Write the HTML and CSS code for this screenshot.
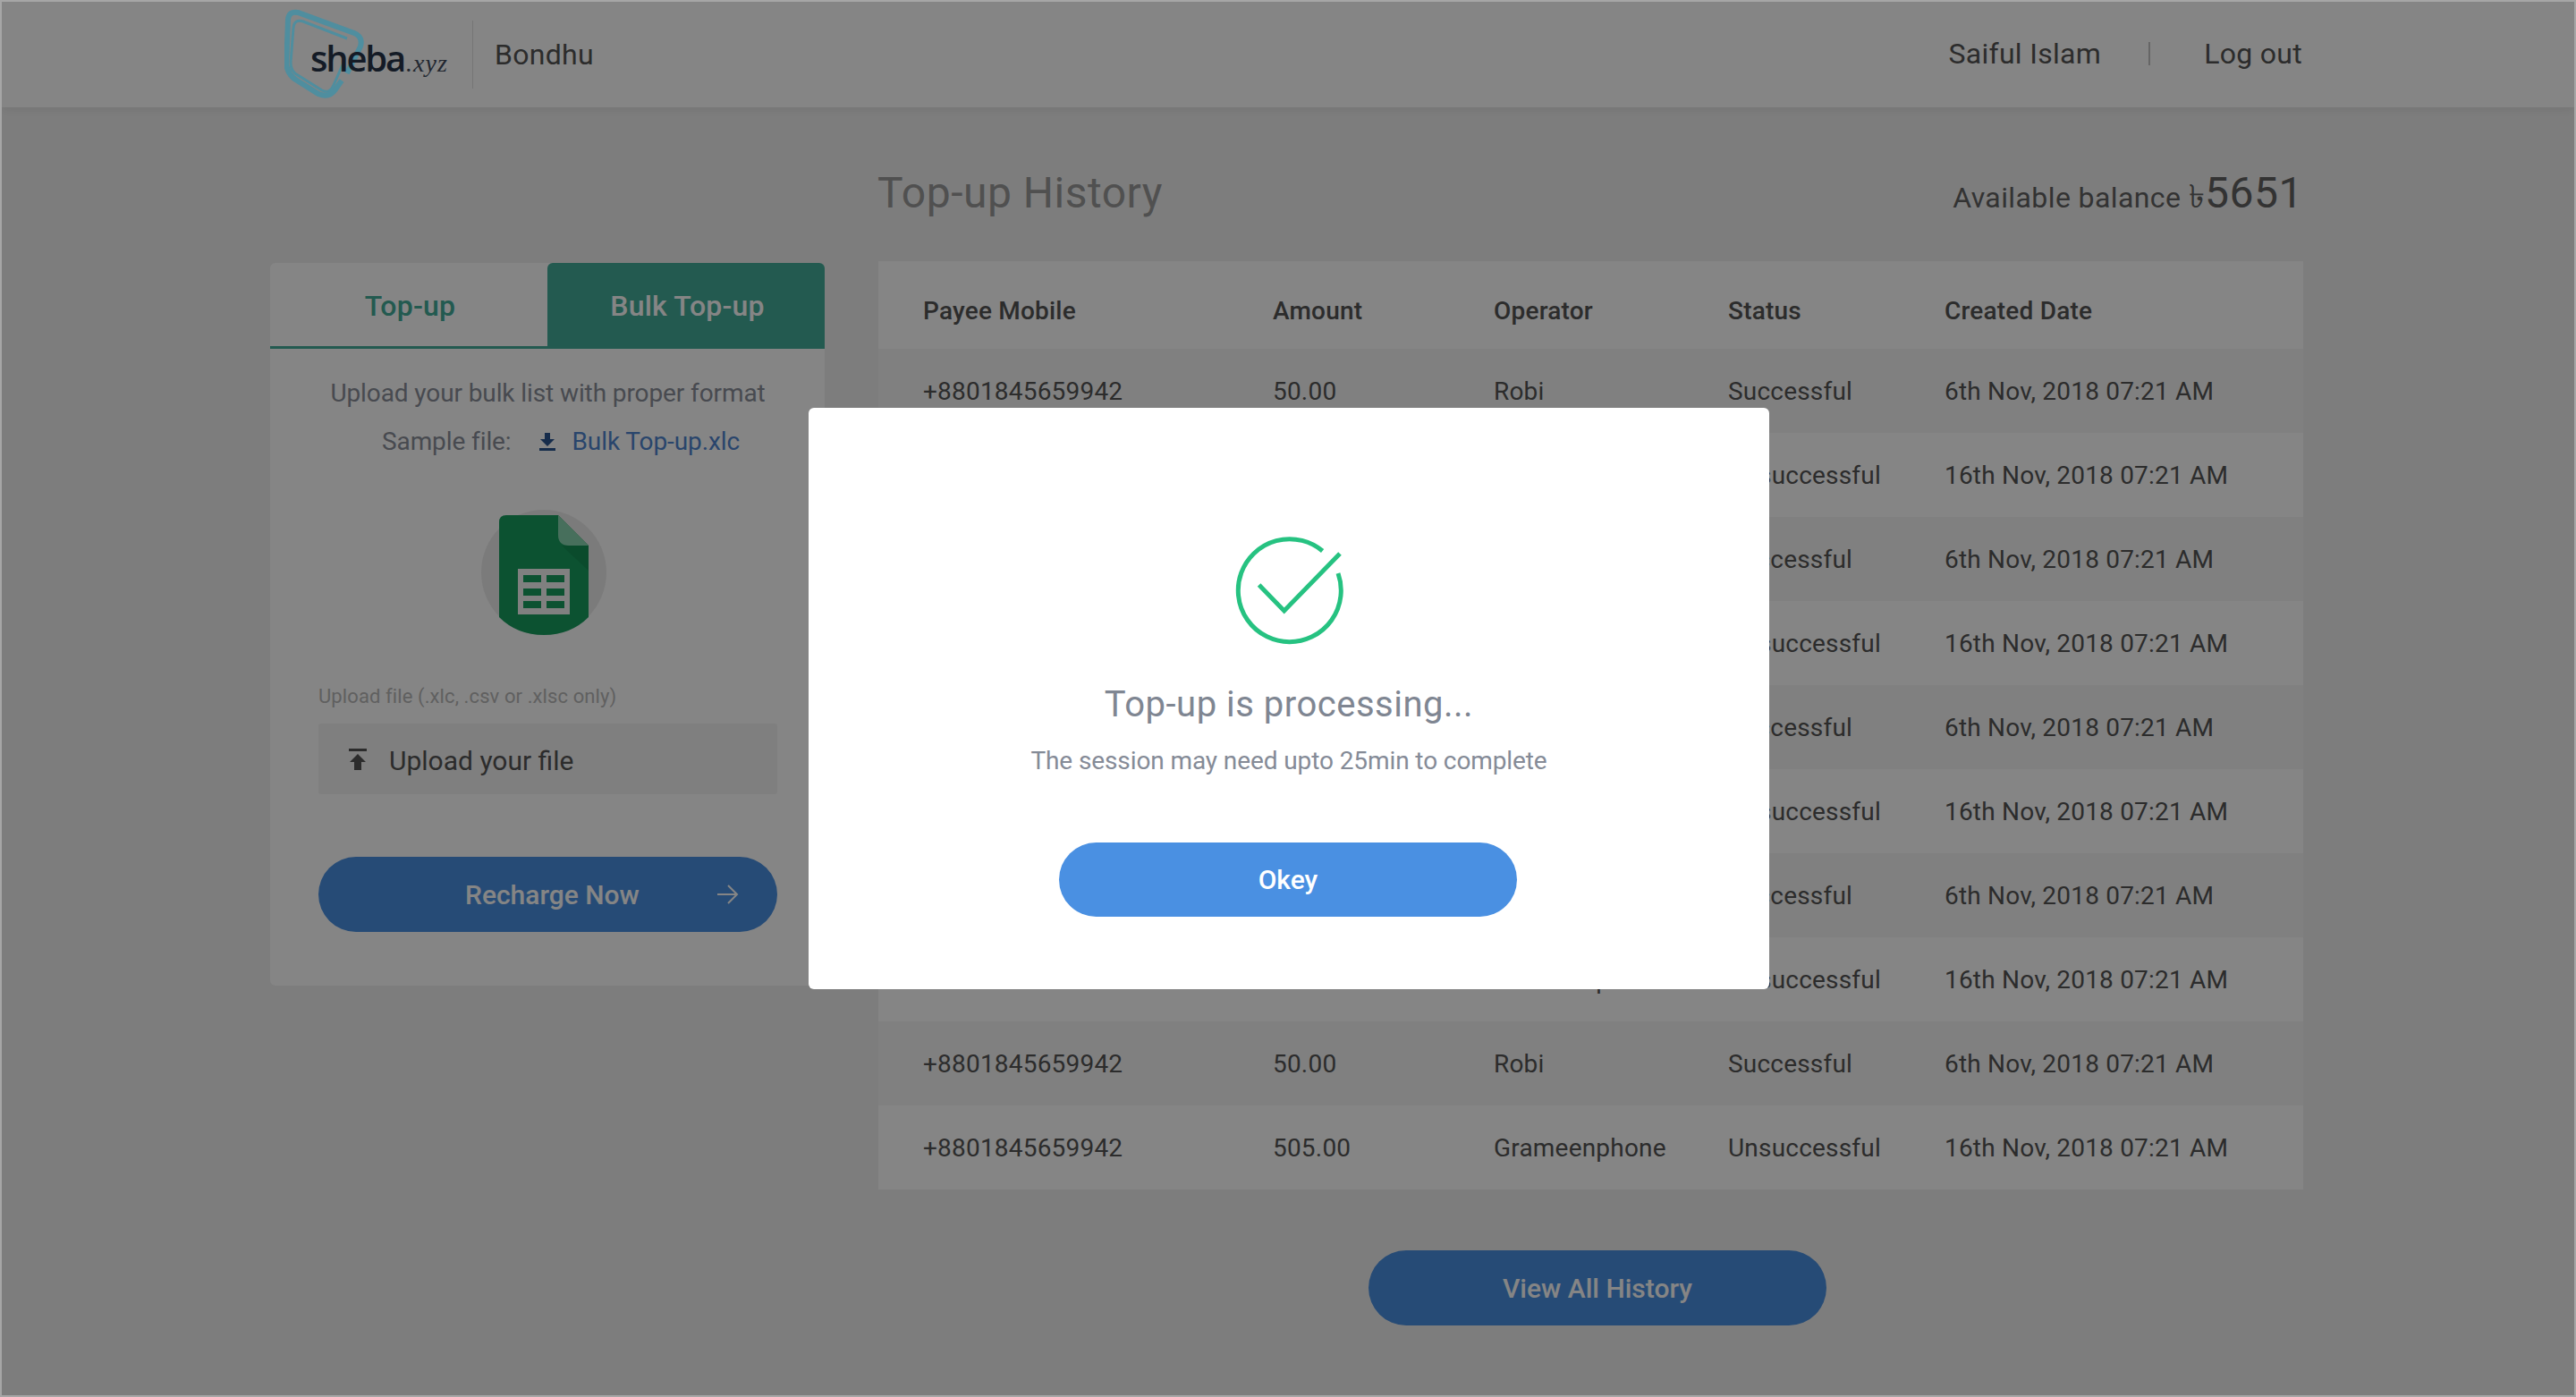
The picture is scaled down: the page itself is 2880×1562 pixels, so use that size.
FILE: index.html
```html
<!DOCTYPE html>
<html>
<head>
<meta name="viewport" content="width=device-width, initial-scale=1.0"/>
<title>Top-up History</title>
<link rel="stylesheet" href="styles.css">
</head>
<body>
<div class="page">

    <header class="topbar">
        <div class="wrap topbarInner">
            <div class="logo">
                <svg class="logoRing" width="92" height="100" viewBox="0 0 92 100" fill="none" stroke="#4f8e9f">
                    <path stroke-width="6" d="M3 40 L4 12 Q5 2 15 4 L78 27 Q88 31 85 42 L70 72"/>
                    <path stroke-width="3" d="M70 33 L21 14 Q11 11 10 21 L7 60 Q7 70 15 74 L42 91 Q51 95 55 85 L67 58"/>
                    <path stroke-width="6" d="M3 40 L2 62 Q4 74 14 80 L38 95 Q50 100 57 90 L64 80"/>
                </svg>
                <span class="logoName">sheba</span><span class="logoDomain">.xyz</span>
            </div>
            <div class="brandDivider"></div>
            <span class="brandName">Bondhu</span>
            <nav class="userNav">
                <span>Saiful Islam</span>
                <span class="navDivider"></span>
                <a href="#">Log out</a>
            </nav>
        </div>
    </header>

    <main class="wrap mainGrid">

        <section class="rechargeCard">
            <div class="tabs">
                <div class="tab">Top-up</div>
                <div class="tab tabActive">Bulk Top-up</div>
            </div>
            <div class="cardBody">
                <p class="hint">Upload your bulk list with proper format</p>
                <p class="sampleRow">
                    <span>Sample file:</span>
                    <svg class="sampleIcon" width="18" height="20" viewBox="0 0 18 20" fill="#2b5590">
                        <path d="M6 0 H12 V7 H17 L9 15 L1 7 H6 Z"/>
                        <rect x="0" y="17" width="18" height="3"/>
                    </svg>
                    <a class="sampleLink" href="#">Bulk Top-up.xlc</a>
                </p>
                <svg class="sheetIcon" width="140" height="140" viewBox="0 0 140 140">
                    <circle cx="70" cy="70" r="70" fill="#ececec"/>
                    <path fill="#189d5f" d="M20 14 Q20 6 28 6 H86 L120 40 V120 Q100 140 70 140 Q40 140 20 120 Z"/>
                    <path fill="#159055" d="M90 40 H120 V68 Z"/>
                    <path fill="#89d5b0" d="M86 6 L120 40 H98 Q86 40 86 28 Z"/>
                    <rect x="41" y="66" width="58" height="51" fill="#f6f6f6"/>
                    <g fill="#189d5f">
                        <rect x="47" y="73" width="20" height="8"/>
                        <rect x="73" y="73" width="20" height="8"/>
                        <rect x="47" y="88" width="20" height="8"/>
                        <rect x="73" y="88" width="20" height="8"/>
                        <rect x="47" y="102" width="20" height="8"/>
                        <rect x="73" y="102" width="20" height="8"/>
                    </g>
                </svg>
                <label class="uploadLabel">Upload file (.xlc, .csv or .xlsc only)</label>
                <div class="uploadBox">
                    <svg width="20" height="24" viewBox="0 0 20 24" fill="#555">
                        <rect x="0" y="0" width="20" height="3"/>
                        <path d="M10 6 L19 15 H14 V24 H6 V15 H1 Z"/>
                    </svg>
                    <span>Upload your file</span>
                </div>
                <a class="pillBtn rechargeBtn" href="#">
                    <span>Recharge Now</span>
                    <svg class="rechargeArrow" width="24" height="24" viewBox="0 0 24 24" fill="none" stroke="#fff" stroke-width="2">
                        <path d="M0 12 H22 M12 2 L22 12 L12 22"/>
                    </svg>
                </a>
            </div>
        </section>

        <section class="history">
            <div class="historyHead">
                <h1>Top-up History</h1>
                <div class="balance">Available balance <span class="taka">৳</span><span class="balanceValue">5651</span></div>
            </div>
            <table class="historyTable">
                <colgroup>
                    <col class="colMobile"><col class="colAmount"><col class="colOperator"><col class="colStatus"><col class="colDate">
                </colgroup>
                <thead>
                    <tr>
                        <th>Payee Mobile</th>
                        <th>Amount</th>
                        <th>Operator</th>
                        <th>Status</th>
                        <th>Created Date</th>
                    </tr>
                </thead>
                <tbody>
                    <tr><td>+8801845659942</td><td>50.00</td><td>Robi</td><td>Successful</td><td>6th Nov, 2018 07:21 AM</td></tr>
                    <tr><td>+8801845659942</td><td>505.00</td><td>Grameenphone</td><td>Unsuccessful</td><td>16th Nov, 2018 07:21 AM</td></tr>
                    <tr><td>+8801845659942</td><td>50.00</td><td>Robi</td><td>Successful</td><td>6th Nov, 2018 07:21 AM</td></tr>
                    <tr><td>+8801845659942</td><td>505.00</td><td>Grameenphone</td><td>Unsuccessful</td><td>16th Nov, 2018 07:21 AM</td></tr>
                    <tr><td>+8801845659942</td><td>50.00</td><td>Robi</td><td>Successful</td><td>6th Nov, 2018 07:21 AM</td></tr>
                    <tr><td>+8801845659942</td><td>505.00</td><td>Grameenphone</td><td>Unsuccessful</td><td>16th Nov, 2018 07:21 AM</td></tr>
                    <tr><td>+8801845659942</td><td>50.00</td><td>Robi</td><td>Successful</td><td>6th Nov, 2018 07:21 AM</td></tr>
                    <tr><td>+8801845659942</td><td>505.00</td><td>Grameenphone</td><td>Unsuccessful</td><td>16th Nov, 2018 07:21 AM</td></tr>
                    <tr><td>+8801845659942</td><td>50.00</td><td>Robi</td><td>Successful</td><td>6th Nov, 2018 07:21 AM</td></tr>
                    <tr><td>+8801845659942</td><td>505.00</td><td>Grameenphone</td><td>Unsuccessful</td><td>16th Nov, 2018 07:21 AM</td></tr>
                </tbody>
            </table>
            <a class="pillBtn viewAllBtn" href="#">View All History</a>
        </section>

    </main>

    <div class="overlay">
        <div class="modal">
            <svg class="checkIcon" width="124" height="124" viewBox="0 0 124 124" fill="none" stroke="#26c281" stroke-width="5">
                <path d="M116 42 A57.5 57.5 0 1 1 98.6 17"/>
                <path d="M27.6 55 L55.7 84 L118 20"/>
            </svg>
            <h2 class="modalTitle">Top-up is processing...</h2>
            <p class="modalText">The session may need upto 25min to complete</p>
            <a class="pillBtn okBtn" href="#">Okey</a>
        </div>
    </div>

</div>
</body>
</html>
```

FILE: styles.css
```css
* {
    box-sizing: border-box;
}

html, body {
    margin: 0;
    padding: 0;
}

body {
    font-family: Roboto, "Noto Sans", sans-serif;
    color: #555;
}

a {
    text-decoration: none;
    color: inherit;
}

p, h1, h2 {
    margin: 0;
    font-weight: 400;
}

.page {
    position: relative;
    width: 2880px;
    height: 1562px;
    border: 2px solid #a6a6a6;
    background: #f0f0f0;
    overflow: hidden;
}

.wrap {
    width: 2273px;
    margin-left: 300px;
}

/* top bar */
.topbar {
    height: 118px;
    background: #fff;
    box-shadow: 0 2px 12px rgba(0, 0, 0, .08);
}

.topbarInner {
    display: flex;
    align-items: center;
    height: 100%;
}

.logo {
    position: relative;
    display: flex;
    align-items: baseline;
    width: 185px;
    height: 100px;
    margin-left: 16px;
    margin-top: -2px;
    padding: 32px 0 0 29px;
}

.logoRing {
    position: absolute;
    z-index: 2;
    left: 0;
    top: 0;
}

.logoName {
    position: relative;
    z-index: 3;
    font-family: "Open Sans", sans-serif;
    font-size: 40px;
    font-weight: 600;
    line-height: 46px;
    letter-spacing: -2.2px;
    color: #141b26;
}

.logoDomain {
    position: relative;
    z-index: 3;
    margin-left: 2px;
    font-family: "Liberation Serif", serif;
    font-style: italic;
    font-size: 28px;
    letter-spacing: 1px;
    color: #222730;
}

.brandDivider {
    width: 1px;
    height: 76px;
    margin-left: 25px;
    background: #e0e0e0;
}

.brandName {
    margin-left: 24px;
    font-size: 32px;
    letter-spacing: .3px;
}

.userNav {
    display: flex;
    align-items: center;
    margin-left: auto;
    margin-right: 1px;
    margin-top: -2px;
    font-size: 32px;
    letter-spacing: .3px;
}

.navDivider {
    width: 2px;
    height: 26px;
    margin: 0 60px 0 53px;
    background: #c4c4c4;
}

/* main columns */
.mainGrid {
    display: grid;
    grid-template-columns: 620px 1593px;
    column-gap: 60px;
}

.rechargeCard {
    height: 808px;
    margin-top: 174px;
    border-radius: 6px;
    background: #fff;
}

.tabs {
    display: flex;
    height: 96px;
}

.tab {
    flex: 1;
    display: flex;
    align-items: center;
    justify-content: center;
    padding: 2px 0 0 3px;
    font-size: 32px;
    font-weight: 500;
    letter-spacing: .2px;
    color: #43ad9a;
    border-bottom: 3px solid #43ad9a;
}

.tabActive {
    border-radius: 6px 6px 0 0;
    background: #43ad9a;
    color: #fff;
}

.cardBody {
    padding: 30px 53px 0 54px;
}

.hint {
    font-size: 28px;
    line-height: 40px;
    letter-spacing: -.1px;
    text-align: center;
    color: #8a8f99;
}

.sampleRow {
    display: flex;
    align-items: center;
    margin: 14px 0 0 71px;
    font-size: 28px;
    line-height: 40px;
    letter-spacing: -.1px;
    color: #8a8f99;
}

.sampleIcon {
    margin: 0 19px 0 31px;
}

.sampleLink {
    color: #4f85d0;
}

.sheetIcon {
    display: block;
    margin: 56px 0 0 182px;
}

.uploadLabel {
    display: block;
    margin-top: 54px;
    font-size: 22px;
    line-height: 30px;
    letter-spacing: .1px;
    color: #b8b8b8;
}

.uploadBox {
    display: flex;
    align-items: center;
    gap: 25px;
    height: 79px;
    margin-top: 15px;
    padding: 0 0 0 34px;
    border-radius: 3px;
    background: #f4f4f4;
    font-size: 30px;
}

.uploadBox span {
    padding-top: 3px;
}

.pillBtn {
    display: flex;
    align-items: center;
    justify-content: center;
    height: 84px;
    border-radius: 42px;
    background: #4a90e2;
    color: #fff;
    font-size: 30px;
    font-weight: 500;
}

.rechargeBtn {
    justify-content: flex-start;
    margin-top: 70px;
    padding: 0 43px 0 164px;
}

.rechargeArrow {
    margin-left: auto;
}

/* history */
.historyHead {
    display: flex;
    justify-content: space-between;
    align-items: baseline;
    height: 104px;
    margin-top: 67px;
}

.historyHead h1 {
    margin-left: -1px;
    font-size: 48px;
    line-height: 56px;
    letter-spacing: .5px;
    color: #999;
}

.balance {
    font-size: 32px;
    letter-spacing: .4px;
    color: #626262;
}

.taka {
    font-size: 36px;
}

.balanceValue {
    font-size: 48px;
    letter-spacing: .5px;
}

.historyTable {
    width: 1593px;
    table-layout: fixed;
    border-collapse: collapse;
    margin-top: 1px;
    font-size: 28px;
    letter-spacing: .2px;
}

.colMobile { width: 441px; }
.colAmount { width: 247px; }
.colOperator { width: 262px; }
.colStatus { width: 242px; }
.colDate { width: 401px; }

.historyTable th {
    height: 98px;
    padding: 12px 0 0;
    text-align: left;
    font-weight: 500;
    background: #fff;
}

.historyTable td {
    height: 94px;
    padding: 0;
}

.historyTable th:first-child,
.historyTable td:first-child {
    padding-left: 50px;
}

.historyTable tbody tr:nth-child(odd) {
    background: #f5f5f5;
}

.historyTable tbody tr:nth-child(even) {
    background: #fff;
}

.viewAllBtn {
    width: 512px;
    margin: 68px 0 0 548px;
}

/* dialog */
.overlay {
    position: absolute;
    z-index: 1;
    inset: 0;
    display: flex;
    align-items: center;
    justify-content: center;
    padding-left: 2px;
    background: rgba(0, 0, 0, .48);
}

.modal {
    display: flex;
    flex-direction: column;
    align-items: center;
    width: 1074px;
    height: 650px;
    padding-top: 143px;
    border-radius: 6px;
    background: #fff;
}

.checkIcon {
    display: block;
    margin-left: 2px;
}

.modalTitle {
    margin-top: 41px;
    font-size: 40px;
    line-height: 48px;
    letter-spacing: .5px;
    color: #7f8692;
}

.modalText {
    margin-top: 21px;
    font-size: 28px;
    line-height: 36px;
    letter-spacing: -.1px;
    color: #858b97;
}

.okBtn {
    width: 512px;
    height: 83px;
    margin-top: 73px;
    margin-left: -2px;
    border-radius: 42px;
}
```
